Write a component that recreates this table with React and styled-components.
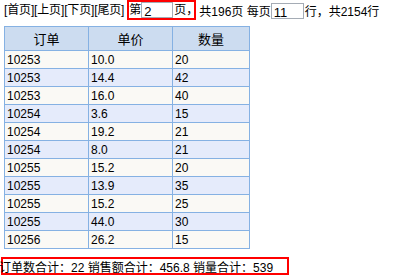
import React from "react";
import styled, { createGlobalStyle } from "styled-components";

const Global = createGlobalStyle`
  html, body { margin: 0; padding: 0; background: #fff; }
  body { font-family: "Liberation Sans", Arial, "Noto Sans CJK SC", sans-serif; font-size: 12px; color: #000; }
`;

const Page = styled.div`
  width: 393px;
  height: 276px;
  overflow: hidden;
  display: flex;
  flex-direction: column;
`;

const Pager = styled.div`
  display: flex;
  align-items: center;
  height: 20px;
  padding-left: 4px;
  white-space: nowrap;
  line-height: 14px;
`;

const NavLinks = styled.span`
  letter-spacing: -0.15px;
  margin-right: 3px;
`;

const Marked = styled.span`
  display: inline-flex;
  align-items: flex-end;
  height: 20px;
  box-sizing: border-box;
  border: 2px solid #f00;
  padding: 0;
`;

const Label = styled.span`
  display: inline-block;
  padding-bottom: 1px;
  margin-right: ${(p) => (p.$tight ? "-4px" : "0")};
`;

const PageInput = styled.input`
  box-sizing: border-box;
  width: ${(p) => p.$w}px;
  height: 16px;
  border: 1px solid #a5acb5;
  padding: 2px 2px 0;
  margin: 0 1px 0 0;
  font-family: "Liberation Sans", Arial, sans-serif;
  font-size: 13px;
  line-height: 13px;
  color: #000;
  background: #fff;
  outline: none;
`;

const Info = styled.span`
  display: inline-flex;
  align-items: flex-end;
  height: 18px;
  margin-left: 3px;
`;

const Grid = styled.table`
  margin: 6px 0 0 4px;
  border-collapse: collapse;
  width: 243px;
  table-layout: fixed;
`;

const HeadCell = styled.th`
  height: 23px;
  padding: 0;
  background: #ccdcf0;
  border: 1px solid #85b1e3;
  font-weight: normal;
  font-size: 13px;
  text-align: center;
  width: ${(p) => p.$w}px;
`;

const Row = styled.tr`
  background: ${(p) => (p.$alt ? "#e5ebfb" : "#faf9f5")};
`;

const Cell = styled.td`
  height: 17px;
  padding: 0 0 0 2px;
  border: 1px solid #85b1e3;
  font-size: 12px;
  line-height: 14px;
`;

const Summary = styled.div`
  margin: 8px 0 0 1px;
  width: 288px;
  height: 18px;
  box-sizing: border-box;
  border: 2px solid #f00;
  display: flex;
  align-items: center;
  white-space: nowrap;
  overflow: visible;
`;

const SummaryText = styled.span`
  margin-left: -4px;
  font-size: 12px;
`;

const rows = [
  ["10253", "10.0", "20"],
  ["10253", "14.4", "42"],
  ["10253", "16.0", "40"],
  ["10254", "3.6", "15"],
  ["10254", "19.2", "21"],
  ["10254", "8.0", "21"],
  ["10255", "15.2", "20"],
  ["10255", "13.9", "35"],
  ["10255", "15.2", "25"],
  ["10255", "44.0", "30"],
  ["10256", "26.2", "15"],
];

export default function App() {
  return (
    <Page>
      <Global />
      <Pager>
        <NavLinks>[首页][上页][下页][尾页]</NavLinks>
        <Marked>
          <Label>第</Label>
          <PageInput $w={32} defaultValue="2" />
          <Label $tight>页，</Label>
        </Marked>
        <Info>
          共196页&nbsp;每页
          <PageInput $w={33} defaultValue="11" />
          行，共2154行
        </Info>
      </Pager>
      <Grid>
        <thead>
          <tr>
            <HeadCell $w={83}>订单</HeadCell>
            <HeadCell $w={83}>单价</HeadCell>
            <HeadCell $w={76}>数量</HeadCell>
          </tr>
        </thead>
        <tbody>
          {rows.map((r, i) => (
            <Row key={i} $alt={i % 2 === 1}>
              <Cell>{r[0]}</Cell>
              <Cell>{r[1]}</Cell>
              <Cell>{r[2]}</Cell>
            </Row>
          ))}
        </tbody>
      </Grid>
      <Summary>
        <SummaryText>订单数合计：22 销售额合计：456.8 销量合计：539</SummaryText>
      </Summary>
    </Page>
  );
}
